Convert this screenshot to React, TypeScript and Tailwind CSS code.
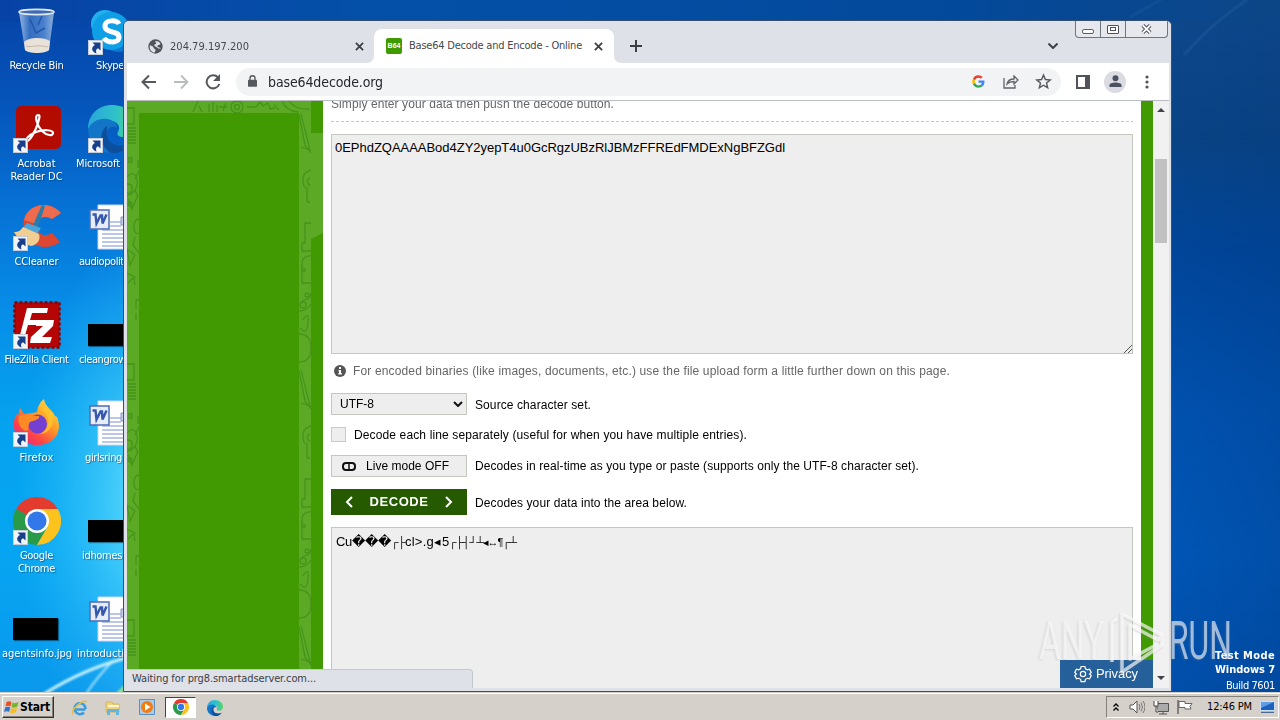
import React, { useLayoutEffect, useRef, useState } from "react";

/* Single line of text whose tracking is adjusted so that it fills `w` pixels. */
function Fit({ w, children, className = "" }: { w: number; children: string; className?: string }) {
  const ref = useRef<HTMLSpanElement>(null);
  const [tracking, setTracking] = useState(0);
  useLayoutEffect(() => {
    if (ref.current) {
      const natural = ref.current.getBoundingClientRect().width;
      setTracking((t) => (t === 0 ? (w - natural) / Array.from(children).length : t));
    }
  }, [w, children]);
  return (
    <span ref={ref} className={`inline-block whitespace-pre ${className}`} style={{ letterSpacing: tracking }}>
      {children}
    </span>
  );
}

const UI = "font-['DejaVu_Sans_Condensed','DejaVu_Sans',sans-serif]";

function Shortcut() {
  return (
    <svg viewBox="0 0 15 15" className="absolute bottom-0 left-0 h-[15px] w-[15px]">
      <rect x=".5" y=".5" width="14" height="14" fill="#f1f4f8" stroke="#c3ccd8" />
      <path d="M4.500 2.500h8v8L10 8.200C8 9 7.500 11 8.500 13.500 3 11.500 3 7 7 5z" fill="#173f8a" />
    </svg>
  );
}

function RecycleBin() {
  return (
    <svg viewBox="0 0 48 48" className="h-12 w-12">
      <defs>
        <linearGradient id="bin" x1="0" x2="1">
          <stop offset="0" stopColor="#a9c4e8" />
          <stop offset=".3" stopColor="#3a72c4" />
          <stop offset=".7" stopColor="#4f86d2" />
          <stop offset="1" stopColor="#9db9df" />
        </linearGradient>
      </defs>
      <path d="M7 5l6 38c2 4 20 4 24 0l5-38z" fill="url(#bin)" opacity=".9" />
      <path d="M12 35c5-5 20-5 26-1l-1 9c-4 4-20 4-24 0z" fill="#e9e2d8" />
      <path d="M14 39c5 2 10-2 22 1" stroke="#c9b9a6" fill="none" />
      <path d="M18 12l6 14 9-5M30 9l-4 9" stroke="#2458a6" strokeWidth="1.500" fill="none" />
      <ellipse cx="24.500" cy="5" rx="17.500" ry="2.600" fill="#3f6cb0" stroke="#dfe6ee" strokeWidth="1.600" />
    </svg>
  );
}

function Skype() {
  return (
    <svg viewBox="0 0 48 48" className="h-12 w-12">
      <circle cx="17" cy="17" r="14" fill="#1fb0ee" />
      <circle cx="30" cy="31" r="14" fill="#0a78d0" />
      <circle cx="23" cy="24" r="19" fill="#0f9fe6" />
      <path d="M31 17c-2-4-14-5-14 2 0 8 14 4 14 11 0 7-12 6-15 1" fill="none" stroke="#fff" strokeWidth="5" />
    </svg>
  );
}

function Acrobat() {
  return (
    <svg viewBox="0 0 48 48" className="h-12 w-12">
      <rect x="3" y="1" width="45" height="43" rx="5" fill="#b30b00" />
      <path
        d="M25 10c-4 0-1 11 4 16s11 5 11 2-9-4-17-1-12 9-9 9 9-11 11-18 2-8 0-8z"
        fill="none"
        stroke="#fff"
        strokeWidth="2.200"
      />
    </svg>
  );
}

function Edge({ className }: { className: string }) {
  return (
    <svg viewBox="0 0 48 48" className={className}>
      <defs>
        <linearGradient id="edgeTop" x1="0" x2="1">
          <stop offset="0" stopColor="#2aa5dc" />
          <stop offset=".6" stopColor="#2fc3c8" />
          <stop offset="1" stopColor="#62d65a" />
        </linearGradient>
      </defs>
      <path d="M0 24C0 10 10 0 24 0s24 9 24 20c0 8-6 12-12 12-5 0-8-2-6-5 3-5 0-11-8-11C12 16 3 20 0 24z" fill="url(#edgeTop)" />
      <path d="M0 24c3-7 11-11 19-10 7 1 10 5 10 9-5-4-12 1-10 9 2 9 14 13 25 6-5 7-12 10-20 10C10 48 0 37 0 24z" fill="#1275c8" />
      <path d="M19 21c-8 5-8 20 4 27 9 1 17-4 21-10-9 5-21 3-24-4-2-5-1-9-1-13z" fill="#0c4f9c" />
    </svg>
  );
}

function CCleaner() {
  return (
    <svg viewBox="0 0 48 48" className="h-12 w-12">
      <path d="M48 10C37-3 15 0 11 17c-4 18 16 36 36 22l-8-9c-8 5-17 0-15-8 1-9 9-11 15-6z" fill="#dd4630" />
      <path d="M48 10C37-3 15 0 11 17l12 4c2-7 10-9 16-5z" fill="#ee6b4d" />
      <path d="M29 2l3 1-7 21-5-2z" fill="#2a7cab" />
      <path d="M14 20l14 5-4 6-14-6z" fill="#4aa5da" />
      <path d="M10 24l16 7c2 6-2 11-8 12C10 41 5 36 1 29c5 0 7-2 9-5z" fill="#f1cd91" />
    </svg>
  );
}

function FileZilla() {
  return (
    <svg viewBox="0 0 48 48" className="h-12 w-12">
      <rect x="1.500" y="1.500" width="45" height="45" fill="#b50505" stroke="#8d0000" strokeWidth="2.500" strokeDasharray="3 2" />
      <path d="M14 7h21l-1 5H19l-2 7h10l-2 5H15l-4 14H6z" fill="#fff" />
      <path d="M24 19h17l-1 6-11 11h10l-2 6H17l1-6 12-11h-7z" fill="#fff" />
    </svg>
  );
}

function Firefox() {
  return (
    <svg viewBox="0 0 48 48" className="h-12 w-12">
      <defs>
        <linearGradient id="fox" x1="1" x2=".2" y1="0" y2="1">
          <stop offset="0" stopColor="#fff34b" />
          <stop offset=".45" stopColor="#ff9a26" />
          <stop offset=".75" stopColor="#ff4545" />
          <stop offset="1" stopColor="#e52880" />
        </linearGradient>
      </defs>
      <path d="M7 9l4 6 8-1 5-1C25 7 27 3 31 0c1 8 8 10 11 17l2 1c6 14-2 28-20 28C5 46-5 28 4 15l1 2z" fill="url(#fox)" />
      <circle cx="24.500" cy="25" r="9.500" fill="#7440d2" />
      <path d="M6 17c8-3 16 0 20 0 2 3-6 5-9 6-3 4 0 8-4 9-6-2-9-9-7-15z" fill="#ff8a25" />
      <path d="M29 11c8 5 9 19-2 24 10 0 16-12 12-21l-8-8z" fill="#ffc52d" opacity=".8" />
    </svg>
  );
}

function Chrome({ className }: { className: string }) {
  return (
    <svg viewBox="0 0 48 48" className={className}>
      <path d="M24 24L3.200 12A24 24 0 0 1 44.800 12z" fill="#e33b2e" />
      <path d="M24 24l10.400 6L24 48A24 24 0 0 1 3.200 12z" fill="#299a48" />
      <path d="M24 12h20.800A24 24 0 0 1 24 48l10.400-18z" fill="#fcc31e" />
      <circle cx="24" cy="24" r="12" fill="#fff" />
      <circle cx="24" cy="24" r="9.500" fill="#3278ea" />
    </svg>
  );
}

function WordDoc() {
  return (
    <svg viewBox="0 0 48 48" className="h-12 w-12">
      <path d="M10 2h36v44H10z" fill="#fff" stroke="#ccd5ee" />
      <path d="M22 19h11M22 23h11M14 27h30M14 31h30M14 35h30M14 39h30M14 43h30" stroke="#7a90cf" />
      <path d="M33 14h8v8h-8z" fill="#c8d0e8" stroke="#8494c6" />
      <rect x="2" y="7" width="19" height="19" fill="#e6ecfa" stroke="#4d6bb5" strokeWidth="1.500" />
      <path d="M4.500 11.500h3l1 9 4-8h1.500l.5 8 4-9" fill="none" stroke="#3558ad" strokeWidth="2.400" />
    </svg>
  );
}

const BlackImage = () => <div className="h-[22px] w-[45px] bg-black shadow-[1px_1px_1px_#0006]" />;

interface IconProps {
  pos: string;
  art: React.ReactNode;
  shortcut?: boolean;
}
function DesktopIcon({ pos, art, shortcut }: IconProps) {
  return (
    <div className={`absolute ${pos}`}>
      {art}
      {shortcut && <Shortcut />}
    </div>
  );
}

function Label({ pos, lines }: { pos: string; lines: [string, number][] }) {
  return (
    <div className={`absolute flex flex-col items-center text-[11px] leading-[13px] text-white [text-shadow:1px_1px_1px_#0348] ${UI} ${pos}`}>
      {lines.map(([t, w]) => (
        <Fit key={t} w={w}>
          {t}
        </Fit>
      ))}
    </div>
  );
}

function Desktop() {
  return (
    <>
      <svg viewBox="0 0 1280 692" className="absolute inset-0 h-[692px] w-[1280px]">
        <defs>
          <radialGradient id="glow">
            <stop offset="0" stopColor="#80f2ff" stopOpacity=".85" />
            <stop offset="1" stopColor="#38c8ff" stopOpacity="0" />
          </radialGradient>
          <filter id="soft">
            <feGaussianBlur stdDeviation="1.300" />
          </filter>
        </defs>
        <ellipse cx="160" cy="500" rx="145" ry="270" fill="url(#glow)" />
        <g fill="none" stroke="#d8fbff" filter="url(#soft)">
          <path d="M44 694Q85 668 130 657" strokeWidth="3" opacity=".9" />
          <path d="M86 694Q98 676 112 662" strokeWidth="2" opacity=".7" />
          <path d="M118 694l8-8" stroke="#8fe09a" strokeWidth="4" />
          <path d="M1248-1q-36 24-64 56" stroke="#4b84bd" strokeWidth="1.500" opacity=".4" />
          <path d="M1130 17l32-18" stroke="#4b84bd" strokeWidth="2" opacity=".25" />
        </g>
      </svg>

      <DesktopIcon pos="left-[12px] top-[7px]" art={<RecycleBin />} />
      <DesktopIcon pos="left-[13px] top-[105px]" art={<Acrobat />} shortcut />
      <DesktopIcon pos="left-[13px] top-[203px]" art={<CCleaner />} shortcut />
      <DesktopIcon pos="left-[13px] top-[301px]" art={<FileZilla />} shortcut />
      <DesktopIcon pos="left-[13px] top-[399px]" art={<Firefox />} shortcut />
      <DesktopIcon pos="left-[13px] top-[497px]" art={<Chrome className="h-12 w-12" />} shortcut />
      <DesktopIcon pos="left-[13px] top-[618px]" art={<BlackImage />} />
      <DesktopIcon pos="left-[88px] top-[7px]" art={<Skype />} shortcut />
      <DesktopIcon pos="left-[88px] top-[105px]" art={<Edge className="h-12 w-12" />} shortcut />
      <DesktopIcon pos="left-[88px] top-[203px]" art={<WordDoc />} />
      <DesktopIcon pos="left-[88px] top-[324px]" art={<BlackImage />} />
      <DesktopIcon pos="left-[88px] top-[399px]" art={<WordDoc />} />
      <DesktopIcon pos="left-[88px] top-[520px]" art={<BlackImage />} />
      <DesktopIcon pos="left-[88px] top-[595px]" art={<WordDoc />} />

      <Label pos="left-0 w-[73px] top-[59px]" lines={[["Recycle Bin", 54]]} />
      <Label pos="left-0 w-[73px] top-[157px]" lines={[["Acrobat", 38], ["Reader DC", 52]]} />
      <Label pos="left-0 w-[73px] top-[255px]" lines={[["CCleaner", 44]]} />
      <Label pos="left-0 w-[73px] top-[353px]" lines={[["FileZilla Client", 64]]} />
      <Label pos="left-0 w-[73px] top-[451px]" lines={[["Firefox", 34]]} />
      <Label pos="left-0 w-[73px] top-[549px]" lines={[["Google", 33], ["Chrome", 37]]} />
      <Label pos="left-[2px] top-[647px]" lines={[["agentsinfo.jpg", 70]]} />
      <Label pos="left-[96px] top-[59px]" lines={[["Skype", 28]]} />
      <Label pos="left-[76px] top-[157px]" lines={[["Microsoft", 44]]} />
      <Label pos="left-[79px] top-[255px]" lines={[["audiopoliti", 47]]} />
      <Label pos="left-[79px] top-[353px]" lines={[["cleangrow", 47]]} />
      <Label pos="left-[85px] top-[451px]" lines={[["girlsring", 37]]} />
      <Label pos="left-[82px] top-[549px]" lines={[["idhomes", 40]]} />
      <Label pos="left-[77px] top-[647px]" lines={[["introducti", 47]]} />

      <div className={`absolute right-[5px] top-[649px] flex flex-col items-end text-[11px] text-white ${UI}`}>
        <Fit w={60} className="font-bold leading-[14px]">Test Mode</Fit>
        <Fit w={60} className="font-bold leading-[14px]">Windows 7</Fit>
        <Fit w={49} className="leading-[17px]">Build 7601</Fit>
      </div>
    </>
  );
}

const CloseX = () => (
  <svg viewBox="0 0 10 10" className="h-[9px] w-[9px]">
    <path d="M1 1l8 8M9 1L1 9" stroke="#3c4043" strokeWidth="2" />
  </svg>
);

function TabStrip() {
  return (
    <div className="flex h-[42px] items-start bg-[#dfe1e8] pl-[3px]">
      <div className="flex h-[42px] w-[247px] items-center pl-[21px] pr-[10px] pt-[9px]">
        <svg viewBox="0 0 24 24" className="h-[15px] w-[15px] shrink-0">
          <circle cx="12" cy="12" r="11.500" fill="#50545a" />
          <path d="M3 10c3 1 5 1 6 4s3 1 3 4-2 3-2 4C4 20 2 15 3 10zM12 3c4 0 7 2 8 5-2 2-4 1-5 3s4 2 6 4c-2 0-4 1-6-1s-5-2-5-4 2-2 3-3-2-2-1-4z" fill="#dfe1e8" />
        </svg>
        <span className={`ml-[7px] flex-1 text-[11px] leading-4 text-[#45484d] ${UI}`}>
          <Fit w={79}>204.79.197.200</Fit>
        </span>
        <CloseX />
      </div>
      <div className="relative mt-[8px] flex h-[34px] w-[240px] items-center rounded-t-lg bg-white pl-[12px] pr-[11px]">
        <svg viewBox="0 0 8 8" className="absolute -left-2 bottom-0 h-2 w-2"><path d="M8 0v8H0Q8 8 8 0z" fill="#fff" /></svg>
        <svg viewBox="0 0 8 8" className="absolute -right-2 bottom-0 h-2 w-2"><path d="M0 0v8h8Q0 8 0 0z" fill="#fff" /></svg>
        <span className="flex h-4 w-4 items-center justify-center rounded-[2px] bg-[#3f9a00] font-['Liberation_Sans',sans-serif] text-[7px] font-bold text-white">B64</span>
        <span className={`ml-[7px] flex-1 text-[11px] leading-4 text-[#45484d] ${UI}`}>
          <Fit w={173}>Base64 Decode and Encode - Online</Fit>
        </span>
        <CloseX />
      </div>
      <svg viewBox="0 0 12 12" className="ml-[16px] mt-[19px] h-3 w-3"><path d="M6 0v12M0 6h12" stroke="#3c4043" strokeWidth="2" /></svg>
      <svg viewBox="0 0 10 6" className="ml-[406px] mt-[22px] h-[6px] w-[10px]"><path d="M.500.500L5 5 9.500.500" fill="none" stroke="#3c4043" strokeWidth="2" /></svg>
      <div className="ml-[17px] flex h-[17px] w-[93px] rounded-b-[4px] border border-t-0 border-[#6e7480] bg-[#e6e8ee]">
        <span className="flex w-[25px] items-end justify-center border-r border-[#6e7480] pb-[3px]"><i className="h-[5px] w-3 rounded-[2px] border border-[#5a5e68] bg-white" /></span>
        <span className="flex w-[25px] items-center justify-center border-r border-[#6e7480]">
          <i className="flex h-[9px] w-3 items-center justify-center rounded-[1px] border border-[#4d515b] bg-white"><i className="h-[4px] w-[6px] border border-[#4d515b]" /></i>
        </span>
        <span className="flex flex-1 items-center justify-center">
          <svg viewBox="0 0 12 11" className="h-[10px] w-[11px]">
            <path d="M2 1.500l8 8M10 1.500l-8 8" stroke="#50545e" strokeWidth="4.200" />
            <path d="M2 1.500l8 8M10 1.500l-8 8" stroke="#fff" strokeWidth="2" />
          </svg>
        </span>
      </div>
    </div>
  );
}

function Toolbar() {
  return (
    <div className="ml-[3px] mr-[2px] flex h-[37px] items-center bg-white pl-[14px]">
      <svg viewBox="0 0 16 16" className="h-4 w-4"><path d="M15 8H2M8 1.500L1.500 8 8 14.500" fill="none" stroke="#55585d" strokeWidth="2" /></svg>
      <svg viewBox="0 0 16 16" className="ml-[16px] h-4 w-4"><path d="M1 8h13M8 1.500L14.500 8 8 14.500" fill="none" stroke="#b9bbbe" strokeWidth="1.800" /></svg>
      <svg viewBox="0 0 16 16" className="ml-[16px] h-4 w-4">
        <path d="M13 3.500A6.500 6.500 0 1 0 14.300 10" fill="none" stroke="#55585d" strokeWidth="2" />
        <path d="M15 0v7H8z" fill="#55585d" />
      </svg>
      <div className="ml-[15px] flex h-[28px] w-[825px] items-center rounded-full bg-[#f1f3f5] pl-[12px] pr-[9px]">
        <svg viewBox="0 0 10 13" className="mb-[2px] h-[12px] w-[9px]">
          <rect x="0" y="5" width="10" height="8" rx="1" fill="#55585d" />
          <path d="M2.200 6V3.500a2.800 2.800 0 0 1 5.600 0V6" fill="none" stroke="#55585d" strokeWidth="1.500" />
        </svg>
        <span className={`ml-[11px] flex-1 text-[14px] leading-5 text-[#25272b] ${UI}`}>
          <Fit w={115}>base64decode.org</Fit>
        </span>
        <svg viewBox="0 0 48 48" className="h-[13px] w-[13px]">
          <path d="M46 24.500c0-1.600-.1-3-.4-4.500H24v9h12.400c-.5 3-2.200 5.300-4.700 7l7.500 6C43.500 38 46 32 46 24.500z" fill="#4285F4" />
          <path d="M24 47c6 0 11.200-2 15-5.400l-7.300-5.800C29.700 37.200 27 38 24 38c-6 0-11-4-12.800-9.500l-7.800 6C7.200 42 15 47 24 47z" fill="#34A853" />
          <path d="M11.200 28.500a14 14 0 0 1 0-9l-7.800-6a23 23 0 0 0 0 21z" fill="#FBBC05" />
          <path d="M24 10c3.400 0 6.400 1.200 8.800 3.500l6.600-6.600A23 23 0 0 0 3.400 13.500l7.800 6C13 14 18 10 24 10z" fill="#EA4335" />
        </svg>
        <svg viewBox="0 0 16 14" className="ml-[18px] h-[14px] w-4"><path d="M1 3v10h11v-3M4 9c1-4 4-5 7-5V1l4 4-4 4V6.500C8 6.500 6 7 4 9z" fill="none" stroke="#5f6368" strokeWidth="1.300" /></svg>
        <svg viewBox="0 0 24 24" className="ml-[16px] h-[17px] w-[17px]"><path d="M12 3l2.700 6.200 6.800.6-5.200 4.400 1.600 6.600L12 17.300l-5.900 3.500 1.600-6.600-5.200-4.400 6.800-.6z" fill="none" stroke="#55585d" strokeWidth="2" /></svg>
      </div>
      <svg viewBox="0 0 14 14" className="ml-[15px] h-[14px] w-[14px]">
        <path d="M0 0h14v14H0z" fill="#505359" /><path d="M2 2h7v10H2z" fill="#fff" />
      </svg>
      <span className="ml-[14px] flex h-[22px] w-[22px] items-center justify-center rounded-full bg-[#dadce2]">
        <svg viewBox="0 0 14 14" className="h-[13px] w-[13px]"><circle cx="7" cy="3.500" r="3.200" fill="#4a5160" /><path d="M.500 13v-2c0-4 13-4 13 0v2z" fill="#4a5160" /></svg>
      </span>
      <svg viewBox="0 0 4 14" className="ml-[19px] h-[14px] w-1"><circle cx="2" cy="2" r="1.600" fill="#505359" /><circle cx="2" cy="7" r="1.600" fill="#505359" /><circle cx="2" cy="12" r="1.600" fill="#505359" /></svg>
    </div>
  );
}

function Sidebar() {
  return (
    <svg viewBox="0 0 196 587" className="h-[587px] w-[196px] shrink-0">
      <defs>
        <pattern id="doodleL" width="12" height="256" patternUnits="userSpaceOnUse" y="6">
          <g fill="none" stroke="#45941a" strokeWidth="1.300">
            <path d="M0 1h7v16H0M1 21h8M1 24h8M1 27h8M1 30h8M1 33h8M1 36h8M2 51h3v4H2zM11 53v8M0 70q8-8 10 3t-10 16M0 77q6 0 5 5t-5 4M12 64l-4 8M1 92l4 10 6-14M8 83l3 7M12 112q-5 0-5 8t5 6M8 130l-2 8 6 8M0 142l3 16 5-10zM0 166l8 4M1 176l6-6 1 8M9 202v-9h3M9 206v7" />
            <circle cx="3" cy="97" r="2" />
          </g>
        </pattern>
        <pattern id="doodleR" width="12" height="256" x="172" patternUnits="userSpaceOnUse" y="6">
          <g fill="none" stroke="#45941a" strokeWidth="1.300">
            <path d="M0 8l6 30 6 8M2 7l9 36-9-3M12 63q-8 2-8 10t4 8v14h3M11 70q-5 4 0 9M12 116H6v20H3v8h9M3 155q2-7 9-6M3 155v21h9M3 194q9-2 9-8M0 204q8 0 12-7M4 213q6-10 5 3t-8 5M0 227q12 0 12 14t-12 14" />
            <circle cx="5" cy="163" r="1.500" /><circle cx="4" cy="198" r="3" /><circle cx="8" cy="188" r="2" />
          </g>
        </pattern>
      </defs>
      <path d="M0 0h196v587H0z" fill="#419a02" />
      <path d="M0 0h184v12H12v575H0zM172 12h12v20h12v100l-12 6v449h-12z" fill="#5ba925" />
      <path d="M0 0h12v587H0z" fill="url(#doodleL)" />
      <path d="M172 12h12v575h-12z" fill="url(#doodleR)" />
      <g fill="none" stroke="#45941a" strokeWidth="1.300">
        <path d="M66 11l5-11M72 5l3 6M82 11V3M86 11V1M90 11V4M96 10l3-8M92 6h8M120 6h9l4-5 3 4 5-3 2 6 5-1M147 4l5 5M155 0q4 10 16 11M162 0q6 9 20 8" />
        <circle cx="110" cy="6" r="6" /><circle cx="110" cy="6" r="2.500" />
      </g>
    </svg>
  );
}

const PAGE = "font-['Liberation_Sans',sans-serif] text-[12px]";

function PageBody() {
  return (
    <div className={`flex w-[818px] shrink-0 flex-col overflow-hidden bg-white pl-2 pr-2 text-black ${PAGE}`}>
      <div className="-mt-[4px] h-[15px] shrink-0 leading-[15px] text-[#666]"><Fit w={283}>Simply enter your data then push the decode button.</Fit></div>
      <div className="mt-[9px] h-px w-[802px] shrink-0 bg-[repeating-linear-gradient(90deg,#c4c4c4_0_3px,#fff_3px_5px)]" />
      <div className="relative mt-[12px] h-[220px] shrink-0 border border-[#c3c8bf] bg-[#eee] pl-[3px] pt-[5px] text-[13px] leading-4">
        <Fit w={450}>0EPhdZQAAAABod4ZY2yepT4u0GcRgzUBzRlJBMzFFREdFMDExNgBFZGdl</Fit>
        <svg viewBox="0 0 8 8" className="absolute bottom-0 right-0 h-2 w-2"><path d="M0 8l8-8M4 8l4-4" stroke="#555" /></svg>
      </div>
      <div className="mt-[9px] flex h-4 shrink-0 items-center pl-[3px] text-[#666]">
        <svg viewBox="0 0 12 12" className="mr-[7px] h-3 w-3"><circle cx="6" cy="6" r="6" fill="#555" /><path d="M5 2h2v2H5zM4.500 5H7v3h.8v1.500H4.300V8H5V6.300h-.5z" fill="#fff" /></svg>
        <Fit w={597}>For encoded binaries (like images, documents, etc.) use the file upload form a little further down on this page.</Fit>
      </div>
      <div className="mt-[14px] flex h-[22px] shrink-0 items-center">
        <div className="flex h-[22px] w-[136px] items-center justify-between border border-[#c3c8bf] bg-[#eee] pl-2 pr-[3px]">
          <Fit w={34}>UTF-8</Fit>
          <svg viewBox="0 0 10 6" className="h-[6px] w-[10px]"><path d="M1 1l4 4 4-4" fill="none" stroke="#111" strokeWidth="2" /></svg>
        </div>
        <Fit w={116} className="ml-2 pt-px">Source character set.</Fit>
      </div>
      <div className="mt-[12px] flex h-[15px] shrink-0 items-center">
        <div className="h-[15px] w-[15px] border border-[#c8ccc4] bg-[#eee]" />
        <Fit w={393} className="ml-2">Decode each line separately (useful for when you have multiple entries).</Fit>
      </div>
      <div className="mt-[13px] flex h-[22px] shrink-0 items-center">
        <div className="flex h-[22px] w-[136px] items-center border border-[#c3c8bf] bg-[#eee] pl-[10px]">
          <svg viewBox="0 0 14 9" className="mr-[10px] h-[9px] w-[14px]"><rect x="1" y="1" width="12" height="7" rx="3" fill="none" stroke="#111" strokeWidth="2" /><path d="M7 1v7" stroke="#111" strokeWidth="1.500" /></svg>
          <Fit w={83}>Live mode OFF</Fit>
        </div>
        <Fit w={444} className="ml-2">Decodes in real-time as you type or paste (supports only the UTF-8 character set).</Fit>
      </div>
      <div className="mt-[12px] flex h-[26px] shrink-0 items-center">
        <div className="flex h-[26px] w-[136px] items-center justify-between bg-[#255a00] px-[14px] text-white">
          <svg viewBox="0 0 8 12" className="h-3 w-2"><path d="M7 1L2 6l5 5" fill="none" stroke="#fff" strokeWidth="2" /></svg>
          <Fit w={59} className="text-[13px] font-bold">DECODE</Fit>
          <svg viewBox="0 0 8 12" className="h-3 w-2"><path d="M1 1l5 5-5 5" fill="none" stroke="#fff" strokeWidth="2" /></svg>
        </div>
        <Fit w={212} className="ml-2 pt-[2px]">Decodes your data into the area below.</Fit>
      </div>
      <div className="mt-[12px] flex h-[220px] shrink-0 border border-[#c3c8bf] bg-[#eee] pl-[4px] pt-[6px] font-['Liberation_Sans','DejaVu_Sans',sans-serif] text-[13px] leading-4">
        <Fit w={16}>Cu</Fit>
        <Fit w={39}>���</Fit>
        <Fit w={14} className="text-[11px]">┌├</Fit>
        <Fit w={29}>cl&gt;.g</Fit>
        <Fit w={8}>◂</Fit>
        <Fit w={7}>5</Fit>
        <Fit w={67} className="text-[11px]">┌├┤┘┴◂↔¶┌┴</Fit>
      </div>
    </div>
  );
}

function Watermark() {
  return (
    <svg viewBox="0 0 210 70" className="pointer-events-none absolute left-[1030px] top-[606px] h-[70px] w-[210px] drop-shadow-[-1px_1px_1px_#8886]">
      <g fill="#fff" opacity=".6" fontFamily="Roboto, sans-serif" fontSize="54" fontWeight="400">
        <text x="9" y="53" textLength="65" lengthAdjust="spacingAndGlyphs">ANY</text>
        <text x="139" y="53" textLength="63" lengthAdjust="spacingAndGlyphs">RUN</text>
      </g>
      <g fill="none" stroke="#fff" strokeWidth="3.500" opacity=".65" strokeLinejoin="round">
        <path d="M82 56V16l5-3M92 60V8l40 21-4 5-28-15v34l28-15" />
        <path d="M92 60v6l40-27v-10" />
      </g>
    </svg>
  );
}

function BrowserWindow() {
  return (
    <div className="absolute left-[123px] top-[20px] h-[672px] w-[1049px] overflow-hidden rounded-t-[6px] border border-[#36506f] bg-[#dfe1e8]">
      <TabStrip />
      <Toolbar />
      <div className="relative ml-[3px] mr-[2px] flex h-[588px] overflow-hidden border-t border-[#b9bcc0]">
        <Sidebar />
        <PageBody />
        <div className="w-[12px] shrink-0 bg-[#419a02]" />
        <div className="flex flex-1 flex-col items-center bg-[#f1f1f1]">
          <svg viewBox="0 0 8 5" className="mt-[6px] h-[5px] w-2"><path d="M0 5l4-4 4 4z" fill="#404347" /></svg>
          <div className="mt-[47px] h-[84px] w-3 bg-[#c1c1c1]" />
          <svg viewBox="0 0 8 5" className="mb-[7px] mt-auto h-[5px] w-2"><path d="M0 0l4 4 4-4z" fill="#404347" /></svg>
        </div>
        <div className={`absolute bottom-0 left-0 flex h-[19px] w-[346px] items-center rounded-tr-[4px] border-r border-t border-[#c5c8ce] bg-[#dfe1e8] pl-[5px] text-[11px] text-[#3c4043] ${UI}`}>
          <Fit w={184}>Waiting for prg8.smartadserver.com...</Fit>
        </div>
        <div className="absolute bottom-0 right-[16px] flex h-[28px] w-[93px] items-center bg-[#26609a] pl-[14px] font-['Liberation_Sans',sans-serif] text-[13px] text-white">
          <svg viewBox="0 0 24 24" className="mr-[4px] h-[18px] w-[18px]">
            <path d="M9.500 2h5l.8 3 2.400 1.400 3-.8 2.300 4.300-2.200 2.100 2.200 2.200-2.300 4.300-3-.8-2.400 1.400-.8 3h-5l-.8-3-2.400-1.400-3 .8L1 14.200 3.200 12 1 9.900l2.300-4.300 3 .8L8.700 5z" fill="none" stroke="#fff" strokeWidth="1.600" />
            <circle cx="12" cy="12" r="3.500" fill="none" stroke="#fff" strokeWidth="1.600" />
          </svg>
          <Fit w={42}>Privacy</Fit>
        </div>
      </div>
    </div>
  );
}

function Taskbar() {
  return (
    <div className={`absolute left-0 top-[692px] flex h-[28px] w-[1280px] items-center border-t border-[#d4d0c8] bg-[#d5d0c9] text-[11px] text-black shadow-[inset_0_1px_0_#fff] ${UI}`}>
      <div className="ml-[2px] mt-[1px] flex h-[22px] w-[52px] items-center border border-b-[#333] border-l-white border-r-[#333] border-t-white pl-[1px] shadow-[inset_-1px_-1px_0_#84807a]">
        <svg viewBox="0 0 16 16" className="h-4 w-4 shrink-0">
          <path d="M2.500 3Q5 1.500 7.500 3L6.500 7.500Q4 6 1.500 7.500z" fill="#e8502a" />
          <path d="M8.500 3.500Q11 5 14.500 3L13.300 7.500Q10 9.500 7.500 8z" fill="#75b52c" />
          <path d="M1.200 8.500Q4 7 6.300 8.500L5 13Q3 11.500 0 13z" fill="#3173cf" />
          <path d="M7.200 9Q10 10.500 13 8.500L12 13Q9 15 6 13.500z" fill="#f5bd21" />
        </svg>
        <Fit w={30} className="text-[12px] font-bold">Start</Fit>
      </div>
      <svg viewBox="0 0 18 18" className="ml-[17px] mt-[2px] h-[18px] w-[18px]">
        <path d="M14.500 10.500H5M14.500 10a5.500 5.500 0 1 0-1.500 3.500" fill="none" stroke="#3a9ce0" strokeWidth="2.600" />
        <path d="M2 15C-1 11 12 0 16 3" fill="none" stroke="#e9bb3c" strokeWidth="1.500" />
      </svg>
      <svg viewBox="0 0 16 16" className="ml-[16px] mt-[2px] h-4 w-4">
        <path d="M1 2h6l1 2h6v8H1z" fill="#eed481" stroke="#d4b65c" /><path d="M3 5h11v2H3z" fill="#fff5cf" />
        <path d="M2 9h12v6h-3v-3H5v3H2z" fill="#66b5df" />
      </svg>
      <svg viewBox="0 0 16 16" className="ml-[18px] mt-[1px] h-4 w-4">
        <path d="M.500.500h15v15H.500z" fill="#a9cce9" stroke="#5c8fc0" />
        <circle cx="8" cy="8" r="6" fill="#f07c12" /><path d="M6 4.500v7L11.500 8z" fill="#fff" />
      </svg>
      <div className="ml-[10px] mt-[1px] flex h-[21px] w-[31px] items-center justify-center border border-b-white border-l-[#444] border-r-white border-t-[#444] bg-white">
        <Chrome className="h-4 w-4" />
      </div>
      <Edge className="ml-[11px] mt-[2px] h-4 w-4" />
      <div className="ml-auto mr-[1px] mt-[1px] flex h-[22px] w-[173px] items-center border border-b-white border-l-[#84807a] border-r-white border-t-[#84807a] pl-[6px]">
        <svg viewBox="0 0 6 8" className="h-[8px] w-[6px]"><path d="M.500 3.500L3 1l2.500 2.500M.500 7.500L3 5l2.500 2.500" fill="none" stroke="#000" strokeWidth="1.300" /></svg>
        <svg viewBox="0 0 16 14" className="ml-[10px] h-[14px] w-4"><path d="M1 5h3l4-4v12L4 9H1z" fill="#fff" stroke="#555" /><path d="M10 4q2 3 0 6M12 2.500q3 4.500 0 9M14 1q4 6 0 12" fill="none" stroke="#777" /></svg>
        <svg viewBox="0 0 16 15" className="ml-[8px] h-[15px] w-4"><path d="M4 3.500h11.500v8H4z" fill="#aaa" stroke="#555" /><path d="M6 14h8M10 12v2" stroke="#555" /><path d="M1 1v5h4V1M3 6v6h2" fill="#fff" stroke="#444" /></svg>
        <svg viewBox="0 0 16 14" className="ml-[8px] h-[14px] w-4"><path d="M1 0v14" stroke="#666" strokeWidth="1.500" /><path d="M2 1.500h6v2h7l-2 3 1 2.500H8V7.500H2z" fill="#fff" stroke="#666" /></svg>
        <Fit w={45} className="ml-[14px]">12:46 PM</Fit>
        <svg viewBox="0 0 15 12" className="ml-[8px] h-3 w-[15px]"><path d="M.500.500h14v9H.500z" fill="#1c62bd" stroke="#cfe0f4" /><path d="M1 1h13L1 7z" fill="#5e9ee4" /><path d="M1 11.300h13" stroke="#234f87" /></svg>
      </div>
    </div>
  );
}

export default function App() {
  return (
    <div className="relative h-[720px] w-[1280px] overflow-hidden bg-[#034aa0]">
      <div className="absolute left-0 top-0 flex h-[692px] w-[1280px]">
        <div className="w-[640px] bg-[linear-gradient(180deg,#0743a6_0%,#0553b9_14%,#0670d4_29%,#068ee8_45%,#05a3ef_62%,#06a5f2_80%,#0a98ec_100%)]" />
        <div className="w-[640px] bg-[linear-gradient(105deg,transparent_60%,#00307066_100%),linear-gradient(180deg,#0f4a8e_0%,#0a4587_20%,#00489f_36%,#0058bc_60%,#0060c8_80%,#005abf_100%)]" />
      </div>
      <div className="absolute left-0 top-0 h-[22px] w-[1280px] bg-[linear-gradient(90deg,#0743a6_0%,#0450a8_30%,#03499b_75%,#0d4686_100%)]" />
      <Desktop />
      <BrowserWindow />
      <Taskbar />
      <Watermark />
    </div>
  );
}
